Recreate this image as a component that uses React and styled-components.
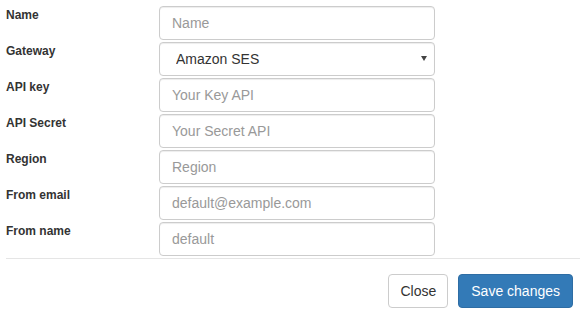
import React from 'react'
import styled, { createGlobalStyle } from 'styled-components'

const Global = createGlobalStyle`
  body {
    margin: 0;
    background: #fff;
    font-family: "Liberation Sans", Arial, sans-serif;
    font-size: 14px;
    color: #333;
  }
  * { box-sizing: border-box; }
`;

const Modal = styled.div`
  width: 580px;
  padding: 6px 0 0 6px;
`;

const Form = styled.form`
  display: flex;
  flex-direction: column;
  gap: 2px;
`;

const Row = styled.div`
  display: grid;
  grid-template-columns: 153px 276px;
  align-items: start;
`;

const Label = styled.label`
  font-weight: bold;
  font-size: 12px;
  line-height: 17px;
  padding-top: 1px;
  color: #333;
`;

const Input = styled.input`
  height: 34px;
  width: 100%;
  padding: 6px 12px;
  font-family: inherit;
  font-size: 14px;
  color: #555;
  border: 1px solid #ccc;
  border-radius: 4px;
  box-shadow: inset 0 1px 1px rgba(0,0,0,.075);
  outline: none;
  &::placeholder { color: #999; }
`;

const SelectWrap = styled.div`
  position: relative;
  height: 34px;
  border: 1px solid #ccc;
  border-radius: 4px;
  box-shadow: inset 0 1px 1px rgba(0,0,0,.075);
`;

const Select = styled.select`
  appearance: none;
  width: 100%;
  height: 32px;
  border: none;
  background: transparent;
  padding: 0 0 0 16px;
  font-family: inherit;
  font-size: 14px;
  color: #333;
  outline: none;
`;

const Caret = styled.svg`
  position: absolute;
  right: 7px;
  top: 13px;
  pointer-events: none;
`;

const Footer = styled.div`
  margin-top: 2px;
  border-top: 1px solid #e5e5e5;
  padding: 15px 7px 15px 0;
  display: flex;
  justify-content: flex-end;
  gap: 10px;
`;

const Button = styled.button`
  height: 34px;
  padding: 6px ${p => p.$primary ? '12px' : '11px'};
  font-family: inherit;
  font-size: 14px;
  line-height: 20px;
  border-radius: 4px;
  border: 1px solid ${p => p.$primary ? '#2e6da4' : '#ccc'};
  background: ${p => p.$primary ? '#337ab7' : '#fff'};
  color: ${p => p.$primary ? '#fff' : '#333'};
  cursor: pointer;
`;

const fields = [
  { label: 'API key', placeholder: 'Your Key API' },
  { label: 'API Secret', placeholder: 'Your Secret API' },
  { label: 'Region', placeholder: 'Region' },
  { label: 'From email', placeholder: 'default@example.com' },
  { label: 'From name', placeholder: 'default' },
]

const App = () => {
  return (
    <Modal>
      <Global />
      <Form>
        <Row>
          <Label>Name</Label>
          <Input placeholder='Name' />
        </Row>
        <Row>
          <Label>Gateway</Label>
          <SelectWrap>
            <Select defaultValue='ses'>
              <option value='ses'>Amazon SES</option>
            </Select>
            <Caret width='6' height='5' viewBox='0 0 6 5'>
              <path d='M0 0H6L3 5Z' fill='#444' />
            </Caret>
          </SelectWrap>
        </Row>
        {fields.map(f => (
          <Row key={f.label}>
            <Label>{f.label}</Label>
            <Input placeholder={f.placeholder} />
          </Row>
        ))}
      </Form>
      <Footer>
        <Button type='button'>Close</Button>
        <Button type='button' $primary>Save changes</Button>
      </Footer>
    </Modal>
  )
}

export default App
